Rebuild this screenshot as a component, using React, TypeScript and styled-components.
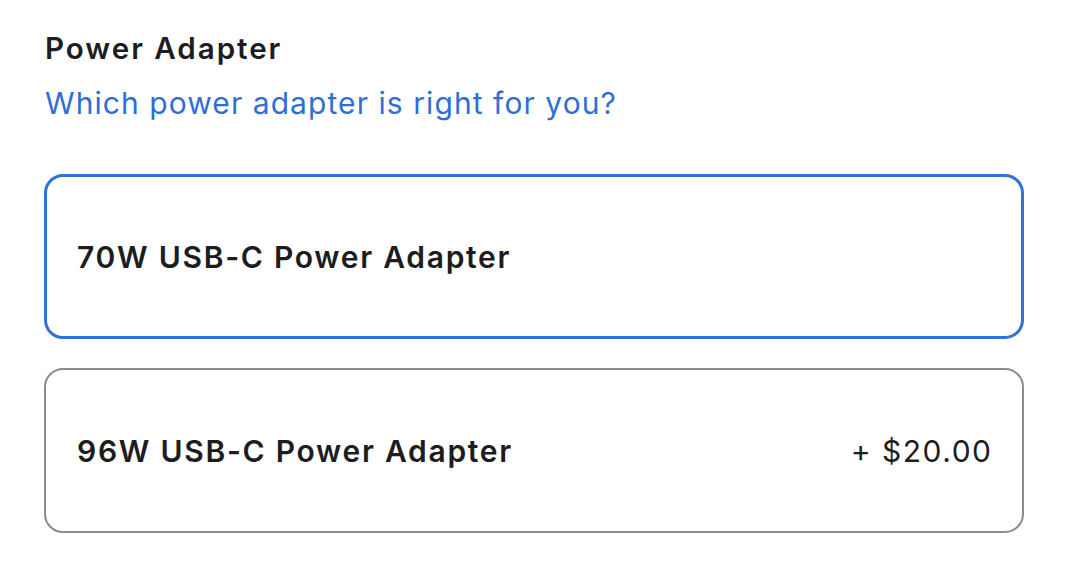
import React from "react";
import styled, { createGlobalStyle } from "styled-components";

const Global = createGlobalStyle`
  html, body { margin: 0; padding: 0; background: #fff; }
  body { font-family: Inter, "Noto Sans", sans-serif; color: #1d1d1f; -webkit-font-smoothing: antialiased; }
`;

const Page = styled.div`
  width: 1090px;
  height: 572px;
  box-sizing: border-box;
  padding: 30px 66px 0 44px;
  display: flex;
  flex-direction: column;
  align-items: flex-start;
`;

const Heading = styled.h2`
  margin: 0 0 0 1px;
  font-size: 29.6px;
  line-height: 36px;
  font-weight: 600;
  letter-spacing: 1.95px;
  color: #1d1d1f;
`;

const HelpLink = styled.a`
  margin: 19px 0 0 1px;
  font-size: 30px;
  line-height: 36px;
  font-weight: 400;
  letter-spacing: 1.07px;
  color: #2f6fd5;
  text-decoration: none;
  cursor: pointer;
`;

const Options = styled.div`
  align-self: stretch;
  margin-top: 53px;
  display: flex;
  flex-direction: column;
  gap: 29px;
`;

const Option = styled.button<{ $selected?: boolean }>`
  all: unset;
  box-sizing: border-box;
  height: 165px;
  display: flex;
  align-items: center;
  justify-content: space-between;
  border-radius: 19px;
  border: ${(p) => (p.$selected ? "3px solid #2f72dc" : "2px solid #8b8b90")};
  padding: 0 ${(p) => (p.$selected ? "30px" : "31px")};
  cursor: pointer;
`;

const Label = styled.span`
  font-size: 30px;
  font-weight: 600;
  letter-spacing: 1.72px;
  color: #1d1d1f;
`;

const Price = styled.span`
  font-size: 30px;
  font-weight: 400;
  letter-spacing: 1.5px;
  margin-right: -1.5px;
  color: #1d1d1f;
`;

export default function App() {
  return (
    <>
      <Global />
      <Page>
        <Heading>Power Adapter</Heading>
        <HelpLink>Which power adapter is right for you?</HelpLink>
        <Options>
          <Option $selected>
            <Label>70W USB-C Power Adapter</Label>
          </Option>
          <Option>
            <Label>96W USB-C Power Adapter</Label>
            <Price>+ $20.00</Price>
          </Option>
        </Options>
      </Page>
    </>
  );
}
